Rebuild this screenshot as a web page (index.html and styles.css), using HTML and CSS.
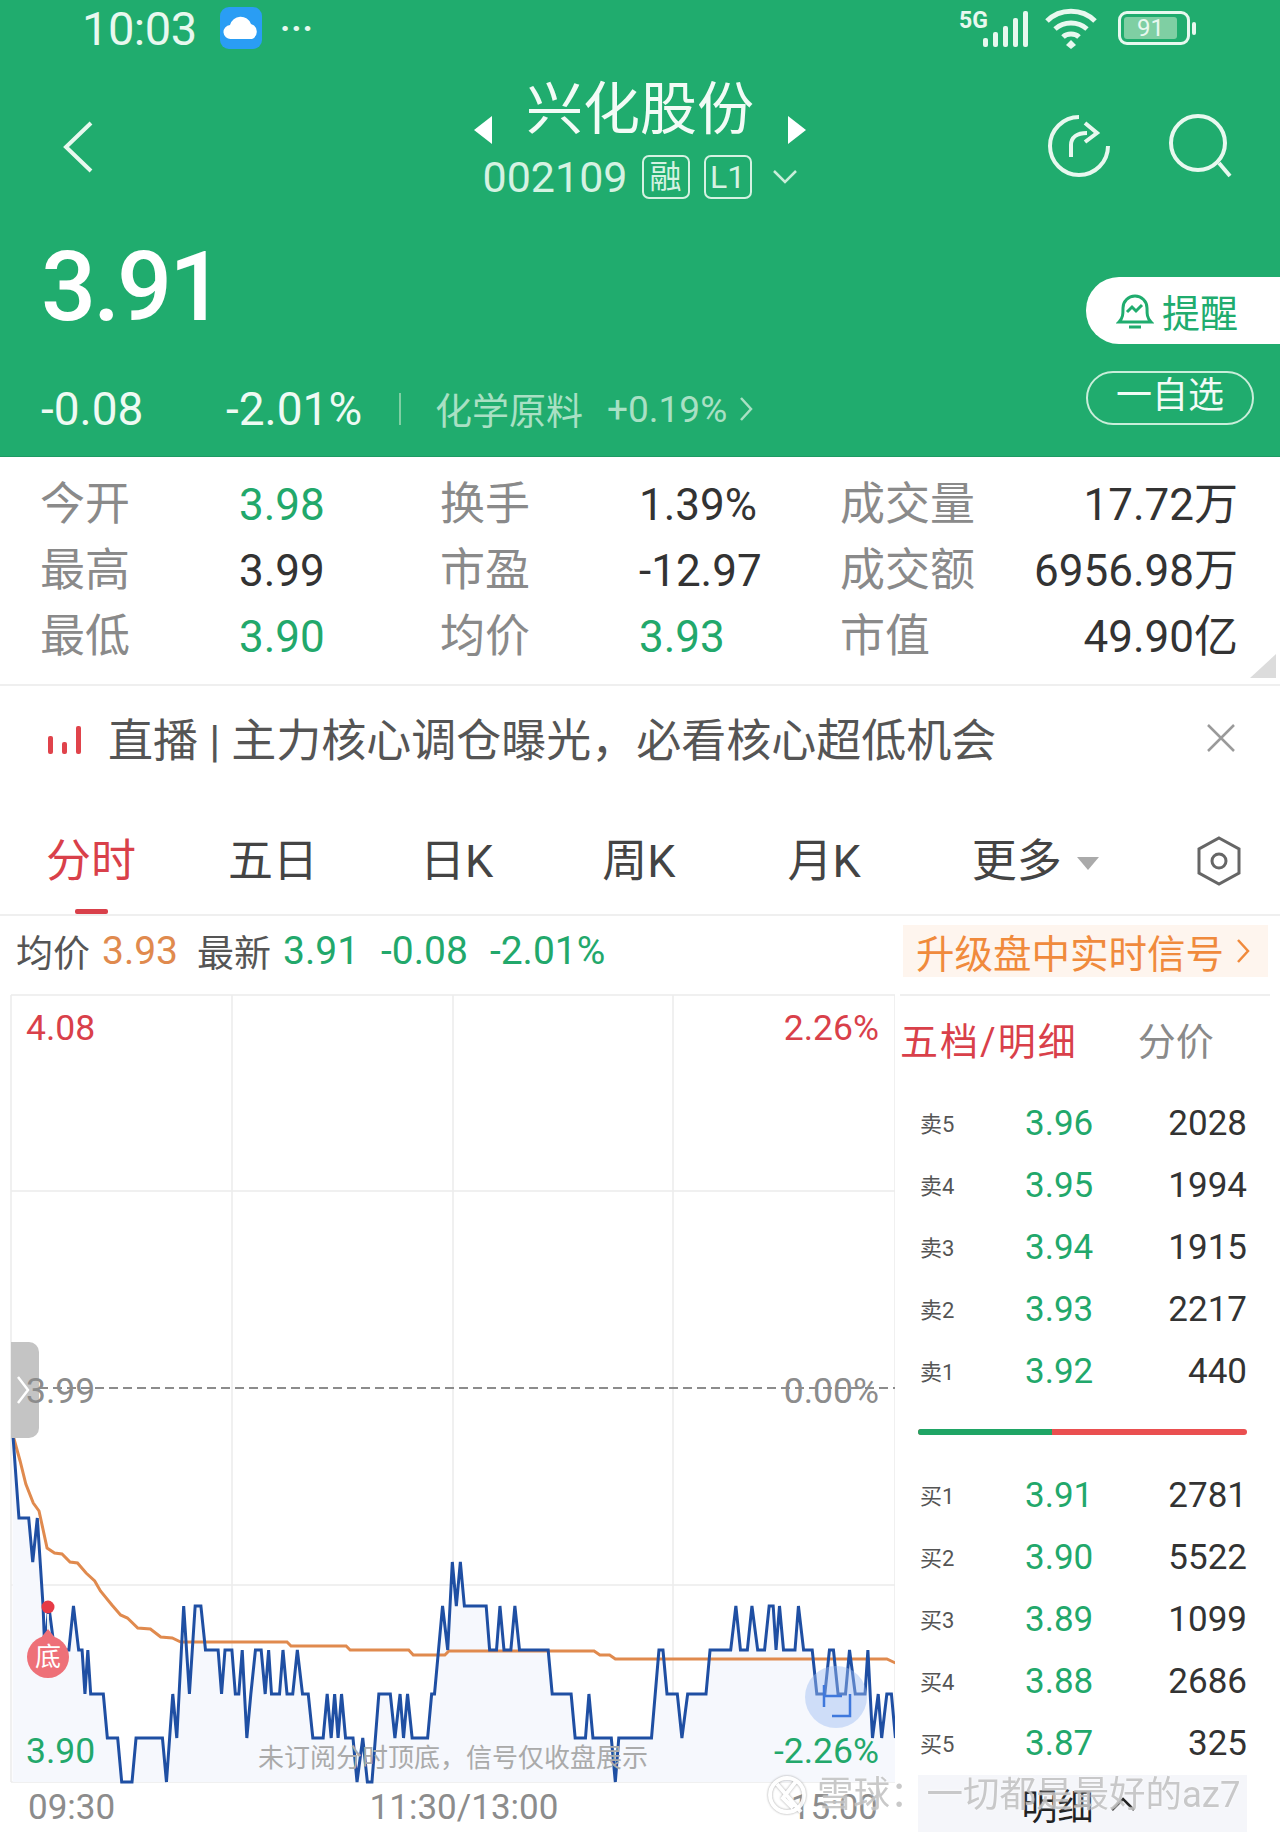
FILE: index.html
```html
<!DOCTYPE html>
<html lang="zh">
<head>
    <meta charset="UTF-8">
    <meta name="viewport" content="width=device-width, initial-scale=1.0">
    <title>兴化股份 002109</title>
    <link rel="stylesheet" href="styles.css">
</head>
<body>
<div class="page">
    <header class="header">
        <div class="status">
            <div class="status-left">
                <span class="clock">10:03</span>
                <svg class="app-icon" viewBox="0 0 42 42"><rect width="42" height="42" rx="9" fill="#2a9df4"/><path d="M11 32a7 7 0 0 1-1-14 11 11 0 0 1 21-1 8 8 0 0 1 1 15z" fill="#fff"/></svg>
                <span class="dots">···</span>
            </div>
            <div class="status-right">
                <svg class="signal" viewBox="0 0 76 40">
                    <text x="1" y="20" class="five-g">5G</text>
                    <g fill="#e8f8ef"><rect x="25" y="30" width="5" height="9" rx="2"/><rect x="35" y="24" width="5" height="15" rx="2"/><rect x="45" y="18" width="5" height="21" rx="2"/><rect x="55" y="10" width="5" height="29" rx="2"/><rect x="65" y="3" width="5" height="36" rx="2"/></g>
                </svg>
                <svg class="wifi" viewBox="0 0 54 42" fill="none" stroke="#e8f8ef" stroke-width="5">
                    <path d="M3 14c13-13 35-13 48 0M11 22c9-8 23-8 32 0M19 30c4-4 12-4 16 0"/>
                    <path d="M27 33l5 5-5 4-5-4z" fill="#e8f8ef" stroke="none"/>
                </svg>
                <div class="battery"><span class="battery-level">91</span></div>
            </div>
        </div>

        <nav class="nav">
            <svg class="nav-back" viewBox="0 0 32 52" fill="none" stroke="#e8f8ef" stroke-width="4"><path d="M29 2L4 26l25 24"/></svg>
            <div class="nav-title">
                <div class="name-row">
                    <span class="arrow arrow-left"></span>
                    <span class="stock-name">兴化股份</span>
                    <span class="arrow arrow-right"></span>
                </div>
                <div class="code-row">
                    <span class="stock-code">002109</span>
                    <span class="badge">融</span>
                    <span class="badge">L1</span>
                    <svg class="code-more" viewBox="0 0 26 16" fill="none" stroke="#c9eeda" stroke-width="2.5"><path d="M2 2l11 11L24 2"/></svg>
                </div>
            </div>
            <div class="nav-tools">
                <svg class="tool" viewBox="0 0 66 66" fill="none" stroke="#e8f8ef" stroke-width="4"><path d="M34 4a29 29 0 1 0 29 29"/><path d="M26 44V32c0-8 6-12 16-12M40 10l12 10-12 9"/></svg>
                <svg class="tool" viewBox="0 0 66 66" fill="none" stroke="#e8f8ef" stroke-width="4"><circle cx="31" cy="30" r="27"/><path d="M52 50l11 13"/></svg>
            </div>
        </nav>

        <div class="quote">
            <div class="quote-main">
                <div class="price">3.91</div>
                <div class="change-row">
                    <span class="change">-0.08</span>
                    <span class="change change-pct">-2.01%</span>
                    <span class="sep"></span>
                    <span class="sector">化学原料</span>
                    <span class="sector sector-pct">+0.19%</span>
                    <svg class="sector-more" viewBox="0 0 14 28" fill="none" stroke="#a9e0c4" stroke-width="2.5"><path d="M2 3l10 11L2 25"/></svg>
                </div>
            </div>
            <div class="quote-actions">
                <div class="btn-remind">
                    <svg class="bell" viewBox="0 0 38 40" fill="none" stroke="#20ac6e" stroke-width="3"><path d="M3 31c4-4 4-8 4-14a12 12 0 0 1 24 0c0 6 0 10 4 14z"/><path d="M13 36h12M11 21l5-5 4 4 6-6"/></svg>
                    <span>提醒</span>
                </div>
                <div class="btn-watch">一自选</div>
            </div>
        </div>
    </header>

    <section class="stats">
        <span class="stat-label">今开</span><span class="stat-value green">3.98</span>
        <span class="stat-label">换手</span><span class="stat-value">1.39%</span>
        <span class="stat-label">成交量</span><span class="stat-value end">17.72万</span>
        <span class="stat-label">最高</span><span class="stat-value">3.99</span>
        <span class="stat-label">市盈</span><span class="stat-value">-12.97</span>
        <span class="stat-label">成交额</span><span class="stat-value end">6956.98万</span>
        <span class="stat-label">最低</span><span class="stat-value green">3.90</span>
        <span class="stat-label">均价</span><span class="stat-value green">3.93</span>
        <span class="stat-label">市值</span><span class="stat-value end">49.90亿</span>
        <span class="corner"></span>
    </section>

    <section class="notice">
        <svg class="notice-icon" viewBox="0 0 34 32" fill="#e0434b"><rect x="0" y="14" width="5" height="18" rx="2"/><rect x="14" y="20" width="5" height="12" rx="2"/><rect x="28" y="4" width="5" height="28" rx="2"/></svg>
        <span class="notice-text">直播 | 主力核心调仓曝光，必看核心超低机会</span>
        <svg class="notice-close" viewBox="0 0 30 30" fill="none" stroke="#9a9a9a" stroke-width="2.5"><path d="M2 2l26 26M28 2L2 28"/></svg>
    </section>

    <section class="tabs">
        <span class="tab tab-active">分时</span>
        <span class="tab tab-5d">五日</span>
        <span class="tab tab-d">日K</span>
        <span class="tab tab-w">周K</span>
        <span class="tab tab-m">月K</span>
        <span class="tab tab-more">更多</span>
        <span class="tab-caret"></span>
        <svg class="tab-gear" viewBox="0 0 48 52" fill="none" stroke="#666" stroke-width="3"><path d="M24 3l20 11v24L24 49 4 38V14z"/><circle cx="24" cy="26" r="7"/></svg>
    </section>

    <section class="info">
        <span class="info-label">均价</span>
        <span class="info-num orange">3.93</span>
        <span class="info-label info-gap">最新</span>
        <span class="info-num green">3.91</span>
        <span class="info-num green info-gap">-0.08</span>
        <span class="info-num green info-gap">-2.01%</span>
        <div class="signal-cta">
            <span>升级盘中实时信号</span>
            <svg viewBox="0 0 14 28" fill="none" stroke="#f08a3c" stroke-width="2.5"><path d="M2 3l10 11L2 25"/></svg>
        </div>
    </section>

    <section class="market">
        <div class="chart-col">
            <div class="plot">
                <svg class="plot-svg" viewBox="0 0 895 790">
                    <g stroke="#ececec" stroke-width="1.5">
                        <path d="M11 1V788M232 1V788M453 1V788M673 1V788M895 1V788"/>
                        <path d="M11 1H895M11 197H895M11 591H895M11 788H895"/>
                    </g>
                    <g transform="scale(0.574 1)">
                        <path class="area" d="M22 788L22 437 33 524 50 524 57 568 65 524 75 612 78 656 85 612 95 656 120 656 128 612 137 656 143 656 148 700 153 656 158 700 180 700 187 744 205 744 212 788 230 788 237 744 283 744 290 788 301 700 308 744 320 612 330 700 340 612 350 612 358 656 380 656 386 700 392 656 404 656 410 700 416 700 422 656 430 744 437 700 445 656 455 656 462 700 468 656 473 700 487 700 493 656 500 700 510 700 518 656 527 700 537 700 545 744 563 744 570 700 577 744 583 700 589 744 595 700 602 744 615 744 622 788 632 744 640 788 648 788 660 700 680 700 688 744 697 700 703 744 710 700 718 744 745 744 752 700 757 700 771 612 780 656 788 568 795 612 802 568 809 612 847 612 853 656 865 656 871 612 878 656 890 656 897 612 905 656 955 656 962 700 995 700 1002 744 1020 744 1026 700 1033 744 1065 744 1072 788 1078 744 1135 744 1148 656 1155 656 1162 700 1180 700 1188 744 1198 700 1230 700 1237 656 1273 656 1282 612 1290 656 1302 656 1310 612 1320 656 1332 656 1340 612 1347 612 1352 656 1358 612 1365 656 1385 656 1391 612 1400 656 1415 656 1423 700 1437 700 1445 656 1452 656 1460 700 1473 700 1480 656 1490 700 1507 700 1512 656 1520 744 1530 700 1536 744 1545 700 1553 700 1560 744L1560 788Z"/>
                        <path class="avg-line" d="M22 440L35 467 45 490 58 509 68 517 82 554 95 559 108 560 122 568 135 569 150 579 165 587 175 597 195 611 210 621 222 624 240 634 262 635 280 643 300 644 315 648 500 648 507 652 603 652 610 656 712 656 720 661 775 661 782 657 1035 657 1045 661 1062 661 1072 665 1545 665 1560 669"/>
                        <path class="price-line" d="M22 437L33 524 50 524 57 568 65 524 75 612 78 656 85 612 95 656 120 656 128 612 137 656 143 656 148 700 153 656 158 700 180 700 187 744 205 744 212 788 230 788 237 744 283 744 290 788 301 700 308 744 320 612 330 700 340 612 350 612 358 656 380 656 386 700 392 656 404 656 410 700 416 700 422 656 430 744 437 700 445 656 455 656 462 700 468 656 473 700 487 700 493 656 500 700 510 700 518 656 527 700 537 700 545 744 563 744 570 700 577 744 583 700 589 744 595 700 602 744 615 744 622 788 632 744 640 788 648 788 660 700 680 700 688 744 697 700 703 744 710 700 718 744 745 744 752 700 757 700 771 612 780 656 788 568 795 612 802 568 809 612 847 612 853 656 865 656 871 612 878 656 890 656 897 612 905 656 955 656 962 700 995 700 1002 744 1020 744 1026 700 1033 744 1065 744 1072 788 1078 744 1135 744 1148 656 1155 656 1162 700 1180 700 1188 744 1198 700 1230 700 1237 656 1273 656 1282 612 1290 656 1302 656 1310 612 1320 656 1332 656 1340 612 1347 612 1352 656 1358 612 1365 656 1385 656 1391 612 1400 656 1415 656 1423 700 1437 700 1445 656 1452 656 1460 700 1473 700 1480 656 1490 700 1507 700 1512 656 1520 744 1530 700 1536 744 1545 700 1553 700 1560 744"/>
                    </g>
                    <path d="M11 394H895" stroke="#8c8c8c" stroke-width="2" stroke-dasharray="9 5"/>
                    <circle cx="836" cy="703" r="31" fill="#9dbcf2" opacity=".45"/>
                    <path d="M824 691v22M824 702h18M832 722h18v-22" fill="none" stroke="#3f78dc" stroke-width="2.5"/>
                    <path d="M48 620v16" stroke="#e8f0f0" stroke-width="2"/>
                    <circle cx="48" cy="613" r="6.5" fill="#e63a46"/>
                    <path d="M40 645l8-10 8 10z" fill="#ee7078"/>
                </svg>
                <div class="side-handle">
                    <svg viewBox="0 0 14 30" fill="none" stroke="#fff" stroke-width="2.5"><path d="M2 2l10 13L2 28"/></svg>
                </div>
                <span class="axis-label left top red">4.08</span>
                <span class="axis-label right top red">2.26%</span>
                <span class="axis-label left mid">3.99</span>
                <span class="axis-label right mid">0.00%</span>
                <span class="axis-label left low green">3.90</span>
                <span class="axis-label right low green">-2.26%</span>
                <span class="plot-tip">未订阅分时顶底，信号仅收盘展示</span>
                <span class="bottom-mark">底</span>
            </div>
            <div class="time-axis">
                <span>09:30</span>
                <span class="time-mid">11:30/13:00</span>
                <span>15:00</span>
            </div>
        </div>

        <aside class="depth">
            <div class="depth-tabs">
                <span class="depth-active">五档/明细</span>
                <span class="depth-tab">分价</span>
            </div>
            <div class="depth-rows">
                <div class="depth-row"><span class="depth-side">卖5</span><span class="depth-price">3.96</span><span class="depth-qty">2028</span></div>
                <div class="depth-row"><span class="depth-side">卖4</span><span class="depth-price">3.95</span><span class="depth-qty">1994</span></div>
                <div class="depth-row"><span class="depth-side">卖3</span><span class="depth-price">3.94</span><span class="depth-qty">1915</span></div>
                <div class="depth-row"><span class="depth-side">卖2</span><span class="depth-price">3.93</span><span class="depth-qty">2217</span></div>
                <div class="depth-row"><span class="depth-side">卖1</span><span class="depth-price">3.92</span><span class="depth-qty">440</span></div>
            </div>
            <div class="depth-bar"><span class="depth-bar-sell"></span></div>
            <div class="depth-rows">
                <div class="depth-row"><span class="depth-side">买1</span><span class="depth-price">3.91</span><span class="depth-qty">2781</span></div>
                <div class="depth-row"><span class="depth-side">买2</span><span class="depth-price">3.90</span><span class="depth-qty">5522</span></div>
                <div class="depth-row"><span class="depth-side">买3</span><span class="depth-price">3.89</span><span class="depth-qty">1099</span></div>
                <div class="depth-row"><span class="depth-side">买4</span><span class="depth-price">3.88</span><span class="depth-qty">2686</span></div>
                <div class="depth-row"><span class="depth-side">买5</span><span class="depth-price">3.87</span><span class="depth-qty">325</span></div>
            </div>
            <div class="depth-detail">
                <span>明细</span>
                <svg viewBox="0 0 26 16" fill="none" stroke="#222" stroke-width="2.5"><path d="M2 14L13 3l11 11"/></svg>
            </div>
        </aside>
    </section>

    <div class="watermark">
        <svg viewBox="0 0 46 46" fill="none" stroke="#fff" stroke-width="4"><circle cx="22" cy="23" r="17"/><path d="M12 12l24 28M32 8L18 26l10 10"/></svg>
        <span>雪球：一切都是最好的az7</span>
    </div>
</div>
</body>
</html>
```

FILE: styles.css
```css
* { box-sizing: border-box; }
html, body { margin: 0; padding: 0; }
body { font-family: Roboto, "Noto Sans CJK SC", sans-serif; background: #fff; color: #333; }
.page { position: relative; width: 1280px; height: 1833px; overflow: hidden; }
.green { color: #22a86b; }
.orange { color: #e08a4e; }
.red { color: #d9404a; }

/* header */
.header { height: 457px; background: #20ac6e; color: #fff; border-bottom: 1px solid #1d9a63; }
.status { display: flex; justify-content: space-between; align-items: center; height: 56px; padding: 0 90px 0 82px; }
.status-left { display: flex; align-items: center; }
.clock { font-size: 47px; font-weight: 400; letter-spacing: -.5px; color: #e8f8ef; width: 138px; }
.app-icon { width: 42px; height: 42px; }
.dots { font-size: 34px; font-weight: 700; margin-left: 18px; letter-spacing: 1px; color: #e8f8ef; line-height: 1; }
.status-right { display: flex; align-items: center; }
.signal { width: 76px; height: 40px; overflow: visible; }
.five-g { font-size: 23px; font-weight: 700; fill: #e8f8ef; font-family: Roboto, sans-serif; }
.wifi { width: 54px; height: 42px; margin-left: 10px; }
.battery { width: 72px; height: 34px; margin-left: 20px; border: 3px solid #e8f8ef; border-radius: 9px; padding: 3px; position: relative; }
.battery::after { content: ""; position: absolute; right: -9px; top: 8px; width: 4px; height: 13px; background: #e8f8ef; border-radius: 2px; }
.battery-level { display: block; height: 100%; width: 88%; background: #7fcfa3; border-radius: 3px; font-size: 24px; line-height: 22px; text-align: center; color: #e8f8ef; }

.nav { display: grid; grid-template-columns: 1fr auto 1fr; align-items: start; height: 179px; }
.nav-back { width: 32px; height: 52px; margin: 65px 0 0 62px; }
.nav-title { display: flex; flex-direction: column; align-items: center; margin-top: 20px; }
.name-row { display: flex; align-items: center; height: 68px; }
.stock-name { font-size: 57px; line-height: 68px; color: #f2fbf6; margin: 0 34px; }
.arrow { width: 0; height: 0; border-top: 14px solid transparent; border-bottom: 14px solid transparent; margin-top: 40px; }
.arrow-left { border-right: 18px solid #fff; }
.arrow-right { border-left: 18px solid #fff; }
.code-row { display: flex; align-items: center; margin-top: 8px; }
.stock-code { font-size: 43px; font-weight: 400; color: #d5f2e2; }
.badge { display: block; width: 48px; height: 44px; margin-left: 14px; border: 2px solid #d5f2e2; border-radius: 7px; font-size: 32px; line-height: 40px; text-align: center; color: #d5f2e2; }
.code-more { width: 26px; height: 16px; margin-left: 20px; }
.nav-tools { display: flex; gap: 56px; margin: 57px 47px 0 0; justify-self: end; }
.tool { width: 66px; height: 66px; }

.quote { display: flex; justify-content: space-between; }
.quote-main { padding-left: 41px; }
.price { font-size: 97px; line-height: 110px; font-weight: 500; letter-spacing: -3px; color: #fff; margin-top: -3px; }
.change-row { display: flex; align-items: center; margin-top: 42px; height: 50px; }
.change { font-size: 46px; color: #eefaf3; font-weight: 400; width: 185px; }
.change-pct { width: 173px; }
.sep { width: 2px; height: 32px; background: #7fcfa3; margin-right: 34px; }
.sector { font-size: 37px; color: #a9e0c4; }
.sector-pct { margin-left: 24px; }
.sector-more { width: 14px; height: 28px; margin-left: 12px; }
.quote-actions { display: flex; flex-direction: column; align-items: flex-start; width: 194px; padding-top: 42px; gap: 27px; }
.btn-remind { display: flex; align-items: center; width: 194px; height: 67px; padding-left: 30px; background: #fff; border-radius: 33px 0 0 33px; color: #20ac6e; font-size: 38px; }
.bell { width: 38px; height: 40px; margin-right: 8px; }
.btn-watch { width: 168px; height: 54px; border: 2px solid #c9eeda; border-radius: 27px; text-align: center; font-size: 36px; line-height: 46px; color: #f2fbf6; }

/* stat grid */
.stats { position: relative; height: 229px; display: grid; grid-template-columns: 199px 201px 199px 201px 200px 198px; grid-template-rows: repeat(3, 66px); align-content: start; padding: 15px 0 0 40px; border-bottom: 2px solid #efefef; }
.stat-label { font-size: 45px; line-height: 66px; color: #8a8a8a; white-space: nowrap; }
.stat-value { font-size: 44px; line-height: 66px; color: #333; white-space: nowrap; }
.stat-value.green { color: #22a86b; }
.stat-value.end { text-align: right; justify-self: end; }
.corner { position: absolute; right: 4px; bottom: 6px; width: 0; height: 0; border-bottom: 24px solid #dcdcdc; border-left: 26px solid transparent; }

.notice { display: flex; align-items: center; height: 104px; padding: 0 44px 0 48px; }
.notice-icon { width: 34px; height: 32px; }
.notice-text { font-size: 45px; color: #555; margin-left: 26px; flex: 1; white-space: nowrap; margin-top: -2px; }
.notice-close { width: 30px; height: 30px; }

/* period tabs */
.tabs { position: relative; display: flex; align-items: center; height: 126px; padding: 18px 37px 0 46px; border-bottom: 2px solid #efefef; }
.tab { font-size: 45px; color: #444; white-space: nowrap; margin-top: -7px; }
.tab-active { color: #d9404a; }
.tab-active::after { content: ""; position: absolute; left: 75px; bottom: 0; width: 33px; height: 5px; background: #d9404a; border-radius: 2px; }
.tab-5d { margin-left: 92px; }
.tab-d { margin-left: 102px; }
.tab-w { margin-left: 109px; }
.tab-m { margin-left: 112px; }
.tab-more { margin-left: 111px; }
.tab-caret { width: 0; height: 0; margin: 4px 0 0 15px; border-top: 13px solid #aaa; border-left: 11px solid transparent; border-right: 11px solid transparent; }
.tab-gear { width: 48px; height: 52px; margin-left: auto; }

.info { display: flex; align-items: center; height: 78px; padding: 0 12px 8px 16px; }
.info-label { font-size: 37px; color: #555; }
.info-num { font-size: 39px; margin-left: 12px; }
.info-num.info-gap { margin-left: 22px; }
.info-label.info-gap { margin-left: 19px; }
.signal-cta { display: flex; align-items: center; height: 52px; margin-left: auto; width: 365px; padding-left: 13px; background: #fef5ee; color: #f08a3c; font-size: 38.5px; white-space: nowrap; }
.signal-cta svg { width: 14px; height: 28px; margin-left: 12px; }

/* chart + order book */
.market { display: flex; align-items: flex-start; }
.chart-col { width: 895px; }
.plot { position: relative; height: 790px; }
.plot-svg { display: block; width: 895px; height: 790px; }
.area { fill: #f6f8fd; stroke: none; }
.avg-line { fill: none; stroke: #e08a4e; stroke-width: 3; vector-effect: non-scaling-stroke; }
.price-line { fill: none; stroke: #1f4fa3; stroke-width: 3; vector-effect: non-scaling-stroke; }
.axis-label { position: absolute; font-size: 35.5px; line-height: 40px; color: #8c8c8c; }
.axis-label.red { color: #d9404a; }
.axis-label.green { color: #22a86b; }
.axis-label.left { left: 26px; }
.axis-label.right { right: 16px; }
.axis-label.top { top: 14px; }
.axis-label.mid { top: 377px; }
.axis-label.low { top: 737px; }
.plot-tip { position: absolute; left: 258px; top: 746px; font-size: 26px; line-height: 36px; color: #aaa; white-space: nowrap; }
.bottom-mark { position: absolute; left: 27px; top: 642px; width: 42px; height: 42px; border-radius: 50%; background: #ee7078; color: #fff; font-size: 26px; line-height: 42px; text-align: center; }
.side-handle { position: absolute; left: 11px; top: 348px; display: flex; align-items: center; width: 28px; height: 96px; padding-left: 5px; background: #c4c4c4; border-radius: 0 10px 10px 0; }
.side-handle svg { width: 14px; height: 30px; }
.time-axis { display: flex; justify-content: space-between; padding: 0 17px 0 28px; font-size: 35px; line-height: 44px; color: #8c8c8c; margin-top: 2px; }
.time-mid { margin-left: 22px; }

.depth { width: 385px; height: 840px; padding-left: 23px; }
.depth-tabs { display: flex; align-items: center; height: 95px; padding-bottom: 9px; margin-left: -18px; border-top: 2px solid #efefef; margin-right: 10px; white-space: nowrap; }
.depth-active { font-size: 38px; color: #d9404a; letter-spacing: 2px; }
.depth-tab { font-size: 38px; color: #8a8a8a; margin-left: 60px; }
.depth-rows { display: flex; flex-direction: column; padding-top: 3px; }
.depth-row { display: flex; align-items: center; height: 62px; width: 329px; }
.depth-side { width: 107px; padding: 0 0 3px 2px; font-size: 22px; color: #555; }
.depth-price { font-size: 35px; color: #22a86b; }
.depth-qty { margin-left: auto; font-size: 35px; color: #333; }
.depth-bar { width: 329px; height: 6px; margin: 27px 0 26px; background: #ea4f50; border-radius: 3px; overflow: hidden; }
.depth-bar-sell { display: block; width: 134px; height: 100%; background: #1fa565; }
.depth-detail { display: flex; align-items: center; justify-content: center; gap: 16px; width: 329px; height: 57px; margin-top: 1px; background: #f5f6fa; font-size: 36px; color: #222; padding-right: 8px; }
.depth-detail svg { width: 26px; height: 16px; }

/* watermark sits on top of everything */
.watermark { position: absolute; left: 765px; top: 1772px; display: flex; align-items: center; gap: 6px; font-size: 36.5px; line-height: 46px; color: #c4c4c4; opacity: .9; white-space: nowrap; text-shadow: 0 0 2px #fff; }
.watermark svg { width: 46px; height: 46px; filter: drop-shadow(0 0 1px #999); }
```
